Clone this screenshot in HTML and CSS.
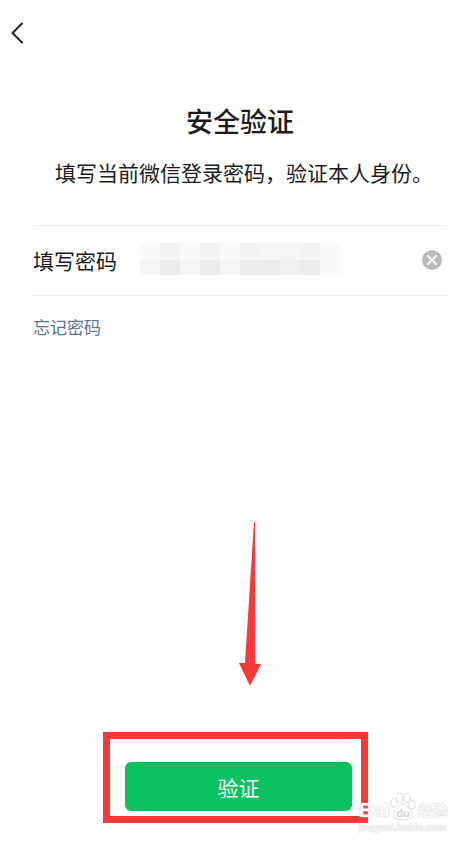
FILE: index.html
```html
<!DOCTYPE html>
<html lang="zh-CN">
<head>
<meta charset="utf-8">
<meta name="viewport" content="width=device-width, initial-scale=1">
<title>安全验证</title>
<link rel="stylesheet" href="styles.css">
</head>
<body>
<form class="page">
  <header class="bar">
    <button class="back" type="button" aria-label="返回">
      <svg width="12" height="22" viewBox="0 0 12 22" fill="none" stroke="#222" stroke-width="2" stroke-linejoin="round" stroke-linecap="round"><path d="M11 1.500 1.500 11l9.500 9.500"/></svg>
    </button>
  </header>
  <main class="content">
    <h1 class="title">安全验证</h1>
    <p class="intro">填写当前微信登录密码，验证本人身份。</p>
    <div class="field">
      <label class="label" for="password">填写密码</label>
      <div class="entry">
        <svg class="mosaic" width="200" height="32" viewBox="0 0 200 32" shape-rendering="crispEdges" aria-hidden="true">
          <path fill="#fafafa" d="M0 0h20v17H0zM40 0h20v17H40zM80 0h20v17H80zM180 0h20v32h-20z"/>
          <path fill="#f4f4f4" d="M20 0h20v17H20zM60 0h20v17H60zM100 0h20v17h-20zM160 0h20v17h-20z"/>
          <path fill="#f5f7f6" d="M120 0h40v17h-40z"/>
          <path fill="#f6f6f6" d="M0 17h20v15H0zM40 17h20v15H40zM80 17h20v15H80z"/>
          <path fill="#ededed" d="M20 17h20v15H20zM60 17h20v15H60zM100 17h40v15h-40zM160 17h20v15h-20z"/>
          <path fill="#f1f1f1" d="M140 17h20v15h-20z"/>
        </svg>
        <input class="input" id="password" type="password">
      </div>
      <button class="clear" type="button" aria-label="清除">
        <svg width="20" height="20" viewBox="0 0 20 20"><circle cx="10" cy="10" r="10" fill="#bbb"/><path d="M6 6l8 8M14 6l-8 8" stroke="#fff" stroke-width="2" stroke-linecap="round"/></svg>
      </button>
    </div>
    <a class="forgot" href="#">忘记密码</a>
  </main>
  <footer class="action">
    <svg class="arrow" width="24" height="164" viewBox="0 0 24 164" aria-hidden="true"><path fill="#fb3838" d="M16 0h1v142h6L12 164 1 141h6z"/></svg>
    <div class="frame"><button class="submit" type="submit">验证</button></div>
  </footer>
  <div class="watermark" aria-hidden="true">
    <div class="brand">
      <span class="latin">Bai</span>
      <svg width="26" height="29" viewBox="0 0 28 30" fill="#fff" stroke="#dadada" stroke-width="1">
        <ellipse cx="4.500" cy="11" rx="3.500" ry="4.500"/><ellipse cx="10.500" cy="5.500" rx="3.500" ry="4.800"/><ellipse cx="18.500" cy="6" rx="3.500" ry="4.800"/><ellipse cx="23.500" cy="13" rx="3.500" ry="4.500"/>
        <path d="M14 12c-3 0-4 3-6 5-3 2-5 5-4 8 1 4 5 4 10 4s10 0 11-4c0-4-2-6-5-8-2-2-3-5-6-5z"/>
        <text class="du" x="14" y="26" text-anchor="middle">du</text>
      </svg>
      <span class="cjk">经验</span>
    </div>
    <div class="site">jingyan.baidu.com</div>
  </div>
</form>
</body>
</html>
```
FILE: styles.css
```css
* { box-sizing: border-box; }
body {
  margin: 0;
  background: #fefefe;
  color: #1c1c1c;
  font-family: "Noto Sans CJK SC", sans-serif;
}
button { padding: 0; border: 0; background: none; font: inherit; cursor: pointer; }
svg { display: block; }
.page { position: relative; display: flex; flex-direction: column; min-height: 100vh; }
.bar { padding: 22px 11px; }
.back { display: block; }
.content { flex: 1; padding: 35px 29px 0 33px; }
.title { margin: 0; font-size: 27px; line-height: 40px; font-weight: 500; text-align: center; }
.intro { margin: 15px 0 0; padding-left: 22px; font-size: 21px; line-height: 32px; white-space: nowrap; }
.field {
  display: flex;
  align-items: center;
  height: 71px;
  margin-top: 37px;
  padding: 0 5px 2px 0;
  border-top: 1px solid #ececec;
  border-bottom: 1px solid #f3f3f3;
}
.label { width: 107px; font-size: 21px; }
.entry { position: relative; flex: 1; height: 34px; }
.mosaic { position: absolute; top: 0; left: 0; }
.input { position: relative; width: 100%; height: 100%; padding: 0; border: 0; outline: 0; background: transparent; font-size: 21px; }
.forgot { display: block; width: max-content; margin-top: 18px; color: #5f7290; font-size: 17px; line-height: 26px; text-decoration: none; }
.action { display: flex; flex-direction: column; align-items: center; padding: 0 5px 22px 0; }
.arrow { margin: 0 0 46px 29px; }
.frame { width: 265px; padding: 23px 9px 5px 15px; border: 7px solid #fb3838; }
.submit { display: block; width: 100%; height: 49px; border-radius: 6px; background: #0ac160; color: #fff; font-size: 21px; }
.watermark { position: absolute; right: 28px; bottom: 10px; color: #fafafa; }
.brand { display: flex; align-items: flex-end; height: 30px; text-shadow: 0 0 1px #ccc, 0 0 1px #ddd; }
.latin { font: bold 20px/22px "Liberation Sans", sans-serif; }
.cjk { padding-left: 2px; font-size: 15px; line-height: 22px; font-weight: 700; }
.du { font: bold 12px "Liberation Sans", sans-serif; fill: #d4d4d4; stroke: none; text-shadow: none; }
.site { font: bold 10px/14px "Liberation Sans", sans-serif; text-shadow: 0 0 1px #ccc, 0 0 1px #ddd; }
```
